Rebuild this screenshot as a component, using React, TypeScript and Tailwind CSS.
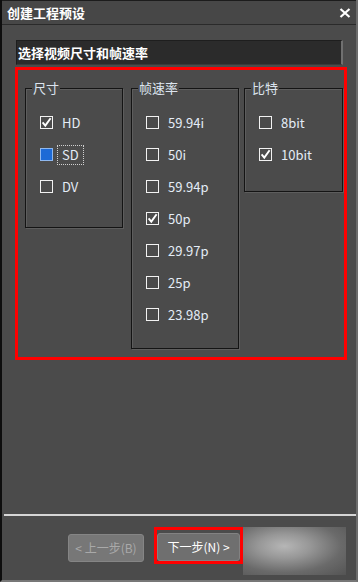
import type { ReactNode } from "react";

type Item = { label: string; state?: "checked" | "focus" };

const sizes: Item[] = [
  { label: "HD", state: "checked" },
  { label: "SD", state: "focus" },
  { label: "DV" },
];

const rates: Item[] = [
  { label: "59.94i" },
  { label: "50i" },
  { label: "59.94p" },
  { label: "50p", state: "checked" },
  { label: "29.97p" },
  { label: "25p" },
  { label: "23.98p" },
];

const bits: Item[] = [{ label: "8bit" }, { label: "10bit", state: "checked" }];

const Check = ({ state }: { state?: Item["state"] }) => {
  if (state === "focus") {
    return <span className="h-[13px] w-[13px] shrink-0 border border-[#8fb8ee] bg-[#1d6ad6]" />;
  }
  return (
    <span className="relative h-[13px] w-[13px] shrink-0 border border-[#f2f2f2]">
      {state === "checked" && (
        <svg className="absolute -left-px -top-px" width="13" height="13" viewBox="0 0 13 13">
          <path d="M2.6 6.4 L5.3 9.6 L10.6 2.2" fill="none" stroke="#ffffff" strokeWidth="1.9" />
        </svg>
      )}
    </span>
  );
};

const Row = ({ item }: { item: Item }) => (
  <div className="flex h-[13px] items-center">
    <Check state={item.state} />
    {item.state === "focus" ? (
      <span className="ml-[4px] border border-dotted border-[#d0d0d0] px-[4px] py-[1px] text-[13px] leading-[16px] text-[#e4ecf6]">
        {item.label}
      </span>
    ) : (
      <span className="ml-[9px] text-[13px] leading-[16px] text-[#e4ecf6]">{item.label}</span>
    )}
  </div>
);

const Group = ({
  title,
  className,
  children,
}: {
  title: string;
  className: string;
  children: ReactNode;
}) => (
  <div className={`relative shrink-0 border border-[#141414] shadow-[inset_1px_1px_0_#5d5d5d,1px_1px_0_#5d5d5d] ${className}`}>
    <span className="absolute -top-[9px] left-[6px] bg-[#4b4b4b] px-[1px] text-[13px] leading-[16px] text-[#dce4ee]">
      {title}
    </span>
    <div className="flex flex-col gap-[19px] pl-[14px] pt-[27px]">{children}</div>
  </div>
);

export default function App() {
  return (
    <div className="flex h-[582px] w-[358px] flex-col overflow-hidden border-l-2 border-l-[#0e0e0e] border-r-2 border-r-[#6c6c6c] border-b-2 border-b-[#777] bg-[#4b4b4b] font-['Noto_Sans_CJK_SC','Noto_Sans',sans-serif]">
      {/* Title bar */}
      <div className="flex h-[25px] shrink-0 items-center justify-between border-t border-t-[#1c1c1c] border-b border-b-[#2a2a2a] bg-[#474747] pl-[5px] pr-[5px]">
        <span className="text-[13px] font-bold leading-none text-white">创建工程预设</span>
        <svg width="12" height="10" viewBox="0 0 12 10">
          <path d="M1.5 1 L10.5 9 M10.5 1 L1.5 9" stroke="#ffffff" strokeWidth="2.2" />
        </svg>
      </div>

      {/* Header */}
      <div className="ml-[14px] mt-[15px] flex h-[25px] w-[327px] shrink-0 items-center border-t border-l border-t-[#1e1e1e] border-l-[#1e1e1e] border-r-2 border-b border-r-[#707070] border-b-[#3a3a3a] bg-[#2b2b2b] pl-[1px]">
        <span className="text-[13px] font-bold leading-none text-white">选择视频尺寸和帧速率</span>
      </div>

      {/* Options */}
      <div className="ml-[13px] mt-[2px] flex h-[293px] w-[332px] shrink-0 items-start border-[3px] border-[#ff0000] pl-[7px] pt-[18px]">
        <Group title="尺寸" className="h-[140px] w-[98px]">
          {sizes.map((s) => (
            <Row key={s.label} item={s} />
          ))}
        </Group>
        <Group title="帧速率" className="ml-[8px] h-[261px] w-[108px]">
          {rates.map((s) => (
            <Row key={s.label} item={s} />
          ))}
        </Group>
        <Group title="比特" className="ml-[5px] h-[104px] w-[99px]">
          {bits.map((s) => (
            <Row key={s.label} item={s} />
          ))}
        </Group>
      </div>

      <div className="flex-1" />

      {/* Footer */}
      <div className="h-[66px] shrink-0">
        <div className="ml-[2px] h-[2px] bg-[#d6d6d6]" />
        <div className="flex items-start pl-[66px]">
          <button
            type="button"
            className="mt-[18px] h-[28px] w-[76px] rounded-[3px] border border-[#858585] bg-[#777777] text-[12px] text-[#a9a9a9]"
          >
            {"< 上一步(B)"}
          </button>
          <div className="ml-[10px] mt-[11px] h-[37px] w-[89px] border-[3px] border-[#ff0000] pt-[3px]">
            <button
              type="button"
              className="h-[28px] w-full rounded-[3px] border border-[#828282] bg-[#6f6f6f] text-[12px] text-white"
            >
              {"下一步(N)  >"}
            </button>
          </div>
          <div className="mt-[11px] h-[48px] w-[103px] bg-[radial-gradient(ellipse_at_40%_40%,#b6b6b6_0%,#979797_30%,#6a6a6a_65%,#545454_100%)]" />
        </div>
      </div>
    </div>
  );
}
